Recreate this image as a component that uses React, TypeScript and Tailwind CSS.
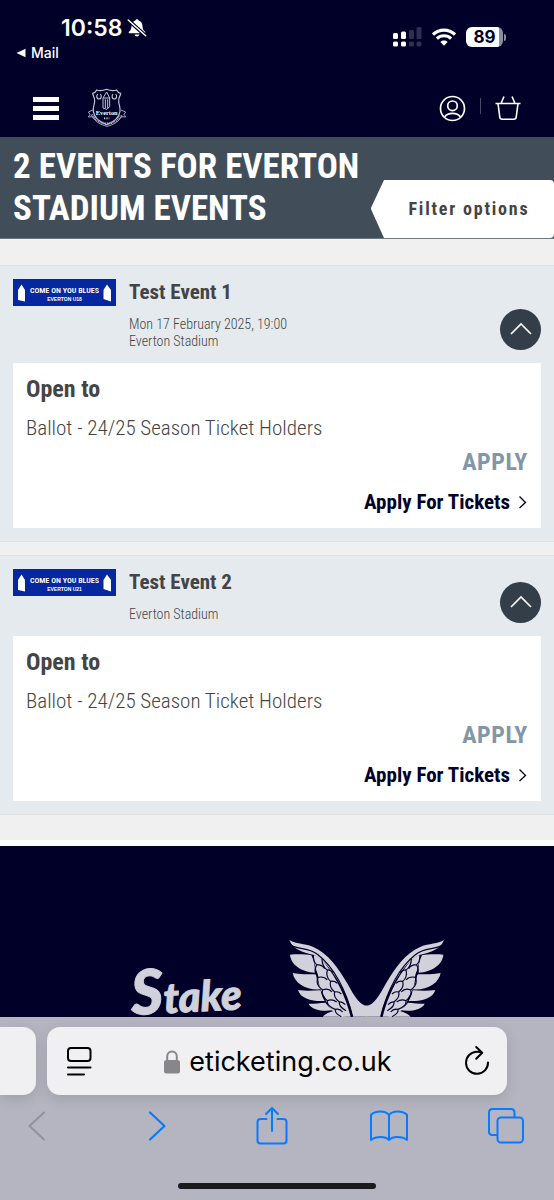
import React from "react";

const narrow = "font-['Roboto_Condensed',Roboto,sans-serif]";

function StatusBar() {
  return (
    <div className="flex items-start justify-between pr-12 pl-4 pt-4 text-white">
      <div>
        <div className="flex items-center gap-[5px] pl-[45px]">
          <span className="text-[23px] leading-6 font-semibold">10:58</span>
          <svg width="20" height="20" viewBox="0 0 20 20" aria-label="Silent mode">
            <path d="M10 1.2c-.9 0-1.5.6-1.6 1.3C6 3.2 4.600 5.200 4.500 8c-.1 3.200-.9 4.200-2.300 5.400-.9.8-.6 1.800.5 1.800h14.600c1.100 0 1.400-1 .5-1.800-1.400-1.200-2.200-2.200-2.300-5.400-.1-2.800-1.500-4.800-3.900-5.500C11.500 1.800 10.900 1.200 10 1.200zM7.600 16.600c.3 1.300 1.200 2 2.400 2s2.100-.7 2.400-2z" fill="#fff" />
            <path d="M.8 3.200l17.500 15.800M2 1.300l17.500 15.800" stroke="#000028" strokeWidth="1.600" />
            <path d="M1.200 2l17.500 15.800" stroke="#fff" strokeWidth="1.500" strokeLinecap="round" />
          </svg>
        </div>
        <a href="#mail" className="flex items-center gap-[5px] text-sm leading-[26px] font-medium">
          <svg width="10" height="10" viewBox="0 0 10 10" aria-hidden="true">
            <path d="M.5 5L9.500.8v8.400z" fill="#fff" />
          </svg>
          Mail
        </a>
      </div>
      <div className="flex items-center gap-[10px] pt-[11px]">
        <svg width="29" height="20" viewBox="0 0 29 20" aria-label="Signal">
          <g fill="#fff">
            <rect x="0" y="6" width="5" height="6" rx="1.500" />
            <rect x="8" y="4.500" width="5" height="7.500" rx="1.500" />
            <rect x="0" y="14.500" width="5" height="5" rx="1.500" />
            <rect x="8" y="14.500" width="5" height="5" rx="1.500" />
          </g>
          <g fill="#2f2f52">
            <rect x="16" y="3" width="5" height="9" rx="1.500" />
            <rect x="23.500" y="0" width="5" height="12" rx="1.500" />
            <rect x="16" y="14.500" width="5" height="5" rx="1.500" />
            <rect x="23.500" y="14.500" width="5" height="5" rx="1.500" />
          </g>
        </svg>
        <svg width="24" height="18" viewBox="0 0 24 18" fill="none" stroke="#fff" aria-label="Wi-Fi">
          <path d="M1 6.500C7.200.6 16.800.6 23 6.500" strokeWidth="3.200" />
          <path d="M4.900 10.600c4-3.800 10.200-3.800 14.200 0" strokeWidth="3" />
          <path d="M12 17.700l-3.600-3.800c2.100-1.900 5.100-1.900 7.200 0z" fill="#fff" stroke="none" />
        </svg>
        <div className="flex items-center gap-px">
          <div className="flex h-5 w-[37px] items-center justify-center rounded-md bg-[linear-gradient(90deg,#fff_0_90%,#8c8ca0_90%)] text-[17px] leading-5 font-bold text-[#000028]">
            89
          </div>
          <div className="h-[7px] w-[2px] rounded-r-full bg-[#8c8ca0]" />
        </div>
      </div>
    </div>
  );
}

function Crest() {
  return (
    <svg width="40" height="40" viewBox="0 0 120 120" fill="none" stroke="#c4c4d6" strokeWidth="3.500" aria-label="Everton">
      <path d="M17 16c6-1 10-5 12-10 8 3 18 3 30-2 12 5 22 5 30 2 2 5 6 9 12 10-1 8-6 12-6 22 0 12 6 18 4 32-2 16-14 30-40 40C33 100 21 86 19 70c-2-14 4-20 4-32 0-10-5-14-6-22z" />
      <path d="M32 18c-5 6-3 15 4 15s9-9 4-15M78 18c-5 6-3 15 4 15s9-9 4-15" />
      <path d="M59 12l9 18v26l-9 8-11-4V30zM49 30h20M55 34v26M62 34v26" strokeWidth="3" />
      <text x="59" y="82" textAnchor="middle" fill="#fff" stroke="none" fontSize="19" fontWeight="bold" fontFamily="Liberation Serif, serif">Everton</text>
      <path d="M51 91h16" strokeWidth="5" strokeDasharray="3 2" />
      <path d="M18 66L4 72l5 7-5 8 13-1c9 17 25 24 43 29 18-5 34-12 43-29l13 1-5-8 5-7-14-6" strokeWidth="2.500" />
      <path d="M14 80c10 16 26 24 46 27 20-3 36-11 46-27" strokeWidth="7" strokeDasharray="3 2.500" stroke="#a9a9c0" />
    </svg>
  );
}

function SiteNav() {
  return (
    <nav className="flex items-center justify-between px-[33px] pt-[22px] pb-[9px]">
      <div className="flex items-center gap-7">
        <button aria-label="Menu" className="flex w-[26px] flex-col gap-1">
          <span className="h-[5px] bg-white" />
          <span className="h-[5px] bg-white" />
          <span className="h-[5px] bg-white" />
        </button>
        <Crest />
      </div>
      <div className="flex items-center gap-[14px]">
        <button aria-label="Account">
          <svg width="27" height="27" viewBox="0 0 27 27" fill="none" stroke="#fff" strokeWidth="1.700">
            <circle cx="13.500" cy="13.500" r="12" />
            <circle cx="13.500" cy="10.800" r="4.800" />
            <path d="M5.500 22c1.800-2.600 4.700-3.700 8-3.700s6.200 1.100 8 3.700" />
          </svg>
        </button>
        <span className="-mt-1 h-4 w-px bg-[#4a4a68]" />
        <button aria-label="Basket">
          <svg width="26" height="26" viewBox="0 0 26 26" fill="none" stroke="#fff" strokeWidth="1.600" strokeLinejoin="round">
            <path d="M.5 8.500h25M3 8.500l1.800 13.700c.2 1.300 1 2 2.200 2h12c1.200 0 2-.7 2.200-2L23 8.500M6 8.500l3-7M20 8.500l-3-7" />
          </svg>
        </button>
      </div>
    </nav>
  );
}

function Banner({ team }: { team: string }) {
  return (
    <svg className="w-[103px] shrink-0" height="27" viewBox="0 0 103 27" aria-label={`Come on you blues, ${team}`}>
      <rect width="103" height="27" fill="#0527a0" />
      <path d="M5 21V11l3.500-5.500L12 11v11.500zM98 22.500L90.500 20V11L94 5.500 98 11z" fill="#fff" />
      <text x="51.500" y="14" textAnchor="middle" fill="#fff" fontSize="8" fontWeight="600" fontFamily="'Roboto Condensed', sans-serif">COME ON YOU BLUES</text>
      <text x="51.500" y="22" textAnchor="middle" fill="#fff" fontSize="5" fontWeight="bold" fontFamily="Liberation Sans, sans-serif">{team}</text>
    </svg>
  );
}

type Event = { title: string; team: string; meta: string[] };

const events: Event[] = [
  { title: "Test Event 1", team: "EVERTON U18", meta: ["Mon 17 February 2025, 19:00", "Everton Stadium"] },
  { title: "Test Event 2", team: "EVERTON U21", meta: ["Everton Stadium"] },
];

function EventCard({ event }: { event: Event }) {
  return (
    <article className="border-y border-[#dfe2e5] bg-[#e5eaee] px-[13px] pb-[13px] text-[#444]">
      <header className="flex items-start gap-[13px] py-[13px]">
        <Banner team={event.team} />
        <div className="flex-1">
          <h2 className="text-[21px] leading-[27px] font-bold">{event.title}</h2>
          <div className="mt-[10px] text-sm leading-[17px] font-[350]">
            {event.meta.map((line) => (
              <p key={line}>{line}</p>
            ))}
          </div>
        </div>
        <button aria-label="Collapse" className="flex size-[41px] shrink-0 items-center justify-center self-end rounded-full bg-[#333e48]">
          <svg width="22" height="16" viewBox="0 0 22 16" fill="none" stroke="#fff" strokeWidth="1.700">
            <path d="M1 12L11 2l10 10" />
          </svg>
        </button>
      </header>
      <div className="bg-white p-[13px]">
        <h3 className="text-2xl leading-[26px] font-bold">Open to</h3>
        <p className="mt-3 text-[21px] leading-7 font-[350]">Ballot - 24/25 Season Ticket Holders</p>
        <p className="mt-[7px] text-right text-2xl leading-[26px] font-bold tracking-wide text-[#8296a8]">APPLY</p>
        <a href="#apply" className="mt-[14px] flex items-center justify-end gap-2 text-[21px] leading-[26px] font-bold text-[#000028]">
          Apply For Tickets
          <svg width="10" height="14" viewBox="0 0 10 14" fill="none" stroke="#000028" strokeWidth="1.300" aria-hidden="true">
            <path d="M1.500 1.500L7.500 7.500l-6 5.500" />
          </svg>
        </a>
      </div>
    </article>
  );
}

function Wing() {
  return (
    <>
      <path fill="#d1d1dc" d="M60 60C78 72 105 70 130 80c45 18 78 65 105 112 18 32 35 65 58 65v33h-43c-8-40-24-78-50-118-24-37-48-62-70-68-30-8-58-14-70-44z" />
      <path fill="#d1d1dc" d="M62 104c18-2 48-2 64 2 8 16 12 34 10 52-38-2-72-24-74-54zM70 159c20 4 44 4 70 4 2 18 8 32 16 45-46 4-80-18-86-49zM86 210c22 4 46 2 68 1 2 12 6 22 12 32-36 2-72-6-80-33zM118 251c18 0 34-2 50-3 6 8 14 16 24 22-30 6-66 0-74-19zM160 290c10-10 26-18 42-17l26 17z" />
      <path fill="#d1d1dc" d="M132 104c14 4 26 14 38 30 30 40 58 92 74 156h-36c-20-16-36-36-42-60-14-20-20-44-20-66-8-18-12-40-14-60z" />
      <g fill="none" stroke="#000028" strokeWidth="3.500">
        <path d="M66 76c22 14 52 6 80 28 46 36 84 104 104 186" />
        <path d="M132 104c0 10 3 24 10 30 8 0 18 2 24 12M142 134c-8 16-6 26 4 38 10-2 20-2 28 8M146 172c-6 14 0 28 14 38 10-4 20-4 28 6M160 210c-4 12 4 24 14 32 10-4 20-2 28 4M174 242c-2 12 8 20 24 26 8-2 16 0 22 8M198 268c-2 8 6 16 18 22" />
        <path d="M158 116c0 14 4 26 16 34 6-2 12 2 18 8M174 150c-4 14 0 26 10 34 8-2 14 0 20 6M184 184c-4 12 0 22 12 32 8-2 14 0 20 6M196 216c-4 10 2 20 14 30 6-2 12 2 18 8M210 246c-2 10 6 18 20 26" />
      </g>
    </>
  );
}

function Footer() {
  return (
    <footer className="flex flex-1 basis-0 items-start justify-center gap-[42px] bg-[#000028] pt-[94px] pl-[22px]">
      <svg width="116" height="77" viewBox="0 0 116 77" aria-label="Stake" className="shrink-0 overflow-visible">
        <text x="1" y="75" transform="rotate(-3 1 75)" fill="#d1d1dc" stroke="#d1d1dc" strokeWidth="1" fontWeight="900" fontStyle="italic" fontFamily="Lato, sans-serif" fontSize="42">
          <tspan fontSize="62">S</tspan>take
        </text>
      </svg>
      <svg width="156" height="77" viewBox="59 60 468 231" aria-label="Castore" className="shrink-0">
        <Wing />
        <g transform="translate(584 0) scale(-1 1)">
          <Wing />
        </g>
      </svg>
    </footer>
  );
}

function BrowserBar() {
  return (
    <div className="bg-[#b5b5c1] pt-[10px]">
      <div className="flex gap-[11px] text-black">
        <div className="h-[68px] w-9 shrink-0 rounded-r-[13px] bg-[#f0f0f3] shadow-[0_4px_14px_rgba(0,0,0,0.12)]" />
        <div className="mr-[47px] flex h-[68px] flex-1 items-center justify-between rounded-[13px] bg-[#f0f0f3] pr-[17px] pl-5 shadow-[0_4px_14px_rgba(0,0,0,0.12)]">
          <button aria-label="Page menu">
            <svg width="25" height="30" viewBox="0 0 25 30" fill="none" stroke="#000" strokeWidth="2" strokeLinecap="round">
              <rect x="1" y="2" width="22.500" height="13" rx="3" />
              <path d="M1 21.500h22.500M1 28.500h16" />
            </svg>
          </button>
          <button className="flex items-center gap-[9px] pt-[2px] text-[27px] leading-8">
            <svg width="16" height="24" viewBox="0 0 16 24" aria-hidden="true">
              <rect y="10" width="16" height="13.500" rx="2.500" fill="#86868b" />
              <path d="M3.200 11V6.500C3.200 3.500 5.200 1.500 8 1.500s4.800 2 4.800 5V11" fill="none" stroke="#86868b" strokeWidth="2" />
            </svg>
            eticketing.co.uk
          </button>
          <button aria-label="Reload">
            <svg width="26" height="32" viewBox="0 0 26 32" fill="none" stroke="#000" strokeWidth="2" strokeLinecap="round" strokeLinejoin="round">
              <path d="M24 17.500A11 11 0 1 1 13 6.800c1.800 0 3.500.2 5 1M12.200 2l6 5.800-6 6" />
            </svg>
          </button>
        </div>
      </div>
      <div className="flex items-center justify-between pt-[11px] pr-[30px] pl-[19px] text-[#087aff] *:flex *:w-9 *:justify-center">
        <button aria-label="Back" className="text-[#9191a0]">
          <svg width="18" height="30" viewBox="0 0 18 30" fill="none" stroke="currentColor" strokeWidth="2" strokeLinecap="round" strokeLinejoin="round">
            <path d="M16 1.500L1.500 15 16 28.500" />
          </svg>
        </button>
        <button aria-label="Forward">
          <svg width="26" height="30" viewBox="0 0 26 30" fill="none" stroke="currentColor" strokeWidth="2.200" strokeLinecap="round" strokeLinejoin="round">
            <path d="M9 1.500L23.500 15 9 28.500" />
          </svg>
        </button>
        <button aria-label="Share">
          <svg width="32" height="40" viewBox="0 0 32 40" fill="none" stroke="currentColor" strokeWidth="2" strokeLinecap="round" strokeLinejoin="round">
            <path d="M10.500 13H4.500C2.500 13 1.500 14 1.500 16v18.500c0 2 1 3 3 3h23c2 0 3-1 3-3V16c0-2-1-3-3-3h-6M16 25V2M10 8l6-6 6 6" />
          </svg>
        </button>
        <button aria-label="Bookmarks">
          <svg width="38" height="32" viewBox="0 0 38 32" className="shrink-0" fill="none" stroke="currentColor" strokeWidth="2" strokeLinejoin="round">
            <path d="M19 5C15.500.5 5.500.3 1 4.800V30c5-4 14.500-4 18 0 3.500-4 13-4 18 0V4.800C32.500.3 22.500.5 19 5zM19 5v25" />
          </svg>
        </button>
        <button aria-label="Tabs">
          <svg width="36" height="36" viewBox="0 0 36 36" fill="none" stroke="currentColor" strokeWidth="2" strokeLinejoin="round">
            <rect x="9.500" y="9.500" width="25.500" height="25" rx="3.500" />
            <path d="M9 27H4.500C2.300 27 1 25.700 1 23.500v-19C1 2.300 2.300 1 4.500 1h18.500c2.200 0 3.500 1.300 3.500 3.500V9" />
          </svg>
        </button>
      </div>
      <div className="mx-auto mt-[37px] mb-[11px] h-[6px] w-[198px] rounded-full bg-[#1b1b1d]" />
    </div>
  );
}

export default function App() {
  return (
    <div className="flex min-h-screen flex-col bg-white font-[Inter,sans-serif]">
      <div className="bg-[#000028]">
        <StatusBar />
        <SiteNav />
      </div>
      <section className={`flex border-y border-t-[#424868] border-b-[#6d7780] bg-[#414e5a] pl-[13px] ${narrow}`}>
        <h1 className="flex-1 pt-2 pb-2 text-[35px] leading-[42px] font-bold text-white">
          2 EVENTS FOR EVERTON STADIUM EVENTS
        </h1>
        <button className="flex h-[58px] w-[183px] shrink-0 self-end text-lg font-bold tracking-widest text-[#444]">
          <svg width="13" height="58" viewBox="0 0 13 58" aria-hidden="true">
            <path d="M13 0L.6 26.500c-.8 1.600-.8 2.400 0 4L13 58z" fill="#fff" />
          </svg>
          <span className="flex h-full flex-1 items-center justify-center rounded-r bg-white">Filter options</span>
        </button>
      </section>
      <main className={`flex flex-col gap-[13px] border-b-[6px] border-white bg-[#f0f0f0] pt-[26px] pb-[25px] ${narrow}`}>
        {events.map((event) => (
          <EventCard key={event.title} event={event} />
        ))}
      </main>
      <Footer />
      <BrowserBar />
    </div>
  );
}
